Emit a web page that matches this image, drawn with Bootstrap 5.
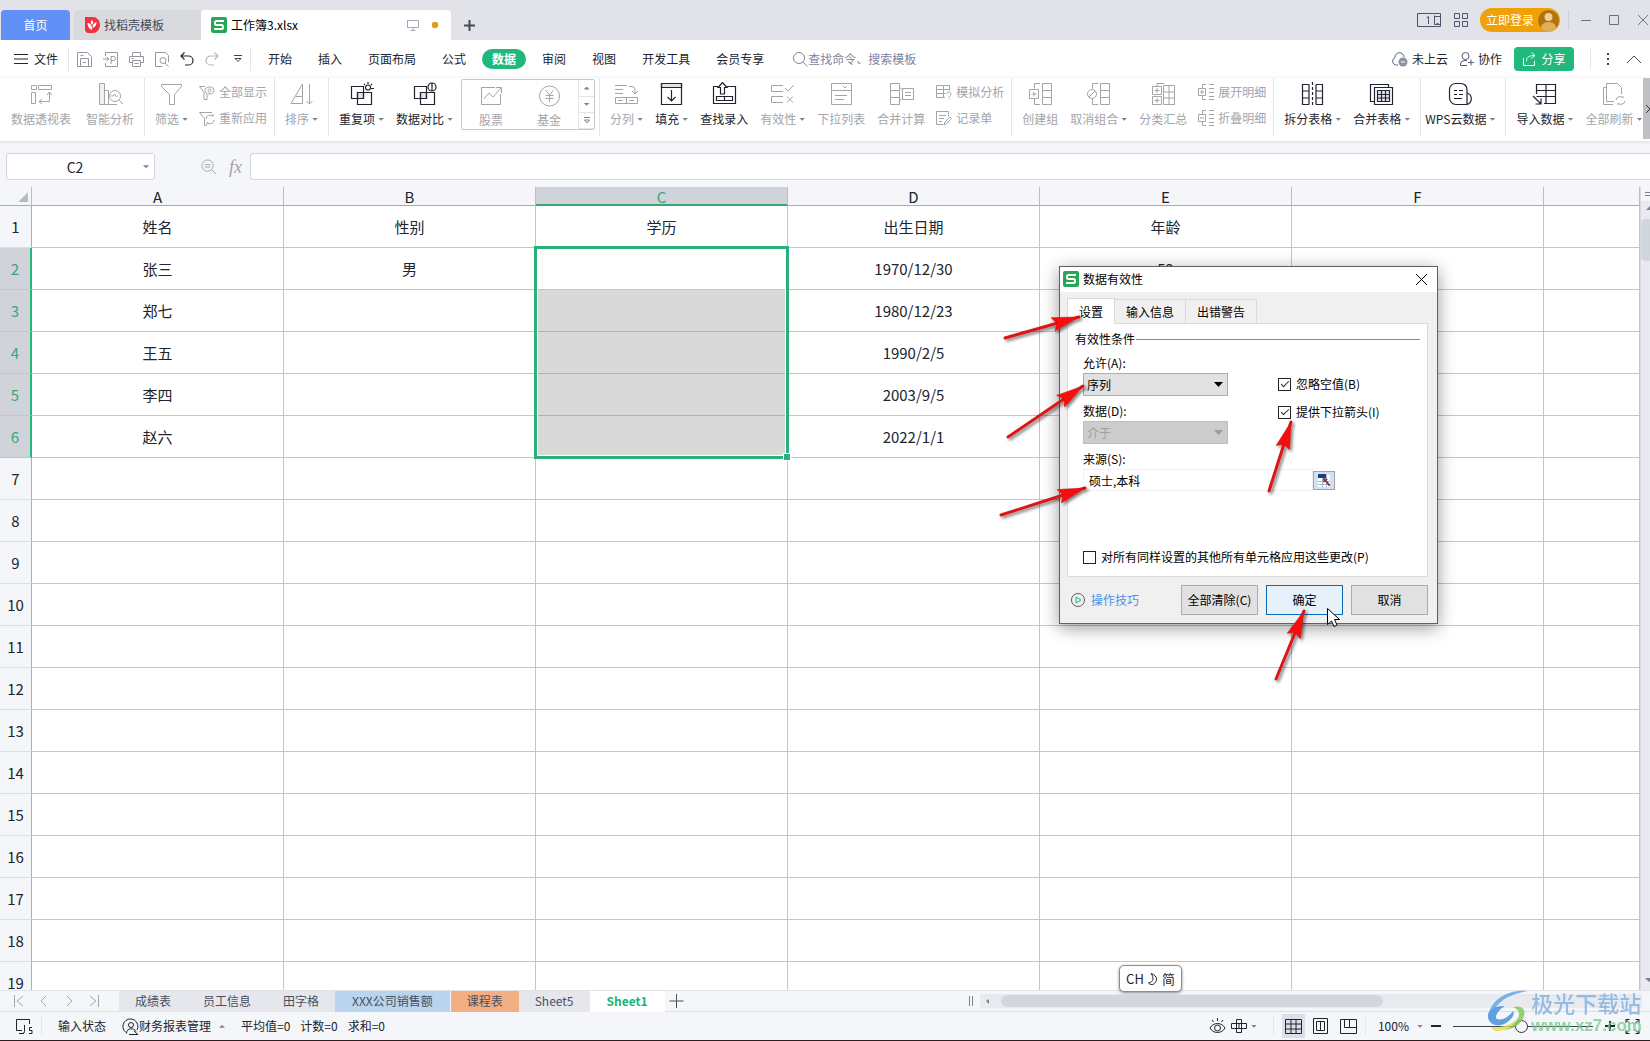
<!DOCTYPE html>
<html lang="zh-CN">
<head>
<meta charset="utf-8">
<meta name="viewport" content="width=device-width, initial-scale=1">
<title>工作簿3.xlsx</title>
<link href="https://cdn.jsdelivr.net/npm/bootstrap@5.3.0/dist/css/bootstrap.min.css" rel="stylesheet">
<style>
:root{--ink:#20242e;--dim:#a2a5aa;--green:#20b97b;--line:#c3c3d3;--chrome:#f4f6f9}
body{font:12px/18px "Noto Sans CJK SC",sans-serif;color:var(--ink);background:var(--chrome);height:100vh}
svg{display:block;flex:none}
svg:not([fill]){fill:none}
svg:not([stroke]){stroke:currentColor}
button,input,select{font:inherit;color:inherit;border:0;background:none;padding:0;border-radius:0}
a{color:inherit;text-decoration:none}
.vsep{width:1px;background:#e6e6ea;flex:none}
/* title bar */
.titlebar{height:40px;background:#e2e3e8;padding:10px 0 0 1px}
.doc{height:30px;border-radius:4px 4px 0 0}
.doc-home{width:69px;background:#6190f8;color:#fff}
.doc-tpl{width:127px;background:#d9dade;padding-left:10px;color:#434a5c;margin-left:4px}
.doc-cur{width:250px;background:#fff;padding:0 12px 0 10px}
.wintools{margin-top:-10px;color:#4b5570}
.login{width:80px;height:24px;border-radius:12px;background:#f0a107;color:#fff;padding-left:6px}
/* menu */
.menubar{height:39px;background:#fff}
.filebtn{margin:0 10px 0 14px;gap:6px}
.quick{gap:11px;color:#9497a0}
.topnav a{padding:0 13px}
.topnav .on{padding:0 3px}
.topnav .on span{display:block;height:20px;line-height:20px;padding:0 10px;border-radius:10px;background:var(--green);color:#fff;font-weight:700}
.find{width:130px;color:#7d86a3}
.find::placeholder{color:#7d86a3;opacity:1}
.share{width:60px;height:24px;border-radius:4px;background:var(--green);color:#fff}
/* ribbon */
.ribbon{height:63px;background:#fff;padding-left:5px;overflow:hidden}
.ribbon-wrap{box-shadow:0 1px 4px #d8dade;z-index:1}
.ribbon .vsep{height:58px;margin:0 4px}
.tool{display:flex;flex-direction:column;align-items:center;padding:4px 6px 0;white-space:nowrap;gap:4px;height:52px}
.tool svg.ic{width:25px;height:24px}
.tool span,.mini{display:flex;align-items:center}
.tool.first{padding-right:9px}
.off{color:var(--dim)}
.caret{width:6px;height:3px;background:#80838b;clip-path:polygon(0 0,100% 0,50% 100%);margin-left:3px;flex:none}
.up{clip-path:polygon(0 100%,100% 100%,50% 0)}
.minis{padding:5px 3px 0 5px}
.mini{gap:4px;height:18px;margin-bottom:8px;white-space:nowrap}
.gallery{width:134px;height:51px;border:1px solid #c6c7cc;border-radius:2px;margin:1px 0 0 2px}
.gallery .tool{width:58px;padding-top:3px}
.gallery-nav{width:16px;border-left:1px solid #e6e6ea;flex:none}
.gallery-nav button{flex:1;display:flex;align-items:center;justify-content:center;border-bottom:1px solid #e6e6ea}
.gallery-nav .caret{margin:0}
.more{width:7px;background:#bfc0c6;height:61px;right:0;top:0;color:#333}
/* formula bar */
.fbar{padding:12px 0 7px 6px}
.namebox{width:149px;height:27px;border:1px solid #d3d5da;border-radius:3px;background:#fff;font-size:14px;margin-right:46px}
.namebox input{width:136px;text-align:center}
.fxline{height:27px;border:1px solid #d3d5da;border-right:0;border-radius:3px 0 0 3px;background:#fff}
.fx{font:italic 18px/20px "Liberation Serif",serif;color:#a2a5aa}
/* grid */
.sheet{min-height:0;overflow:hidden;position:relative}
.cells{table-layout:fixed;border-collapse:separate;border-spacing:0;width:100%;background:#fff;font-size:15px;line-height:20px;text-align:center}
.cells th{font-weight:400;background:var(--chrome);text-align:center;padding:0}
.cells thead th{height:19px;line-height:16px;padding-top:2px;border-right:1px solid #b9bccb;border-bottom:1px solid #a6a7c0}
.cells td,.cells tbody th{height:42px;border-right:1px solid var(--line);border-bottom:1px solid var(--line);padding:0}
.cells tbody th{border-right-color:#aaabc4;border-bottom-color:#dcdde6}
.cells thead .hot{background:#d1d3da;color:#3aa57c;box-shadow:inset 0 -1px #36a678;border-bottom-color:#36a678}
.cells tbody .hot{background:#d1d3da;color:#3aa57c;border-right:2px solid var(--green);border-bottom-color:#c3c5d2}
.cells .picked{background:#d9d9d9;border-bottom-color:#b0b0bb}
.corner{width:10px;height:10px;background:#b9bbbd;clip-path:polygon(100% 0,100% 100%,0 100%);margin:0 3px 0 auto}
.selbox{left:-2px;top:-2px;width:255px;height:213px;border:3px solid #2bb07c;box-shadow:inset 0 0 0 1px #fff}
.selbox i{width:6px;height:6px;right:-4px;bottom:-4px;background:#2bb07c;box-shadow:0 0 0 1px #fff}
.vbar{width:10px;background:#e9eaef;border-left:1px solid #d8dae0}
.vthumb{height:42px;background:#d1d5dc;border-radius:5px 0 0 5px;margin-top:9px}
/* bottom bars */
.tabsbar{height:22px;border-top:1px solid #e2e3e8;border-bottom:1px solid #dcdee6;color:#4a4f5e}
.tabsbar .stab{padding:0 16px;height:21px;line-height:20px;background:#e6e7ed}
.nav-ar{gap:13px;padding:0 19px 0 13px;color:#a2a5ad}
.tabsbar .blue{background:#b8d4ee;padding:0 17px}
.tabsbar .orange{background:#f3ae84;margin-left:1px}
.tabsbar .now{background:#fff;color:#20b573;font-weight:700;padding:0 17px}
.hbar{height:14px;background:#e9eaef;margin:3px 0}
.hthumb{width:382px;height:12px;border-radius:6px;background:#d3d6dc}
.status{height:29px;border-bottom:1px solid #2c1d20}
.stats{gap:10px}
.status .on-view{width:23px;height:24px;background:#dcdfe8}
.zoomer{width:140px;height:14px;appearance:none;margin:0 12px}
.zoomer::-webkit-slider-runnable-track{height:1px;background:#3d4252}
.zoomer::-webkit-slider-thumb{appearance:none;width:13px;height:13px;border:1px solid #333;border-radius:50%;background:#f4f6f9;margin-top:-6px}
/* dialog */
.dlg{left:1059px;top:266px;width:379px;border:1px solid #5e6064;background:#f0f0f0;box-shadow:0 4px 16px rgba(0,0,0,.4);color:#000;z-index:5}
.dlg-head{height:25px;background:#fff;padding:0 10px 1px 3px}
.dlg-body{padding:6px 9px 8px 7px}
.dtabs button{height:24px;padding:0 11px;border:1px solid #d9d9d9;border-left:0;border-bottom:0;background:#f0f0f0;margin-top:1px}
.dtabs .act{background:#fff;margin:0 0 -1px;height:26px;border-left:1px solid #d9d9d9;z-index:1;position:relative}
.pane{height:254px;border:1px solid #dcdcdc;background:#fff;padding:6px 7px 10px 7px}
.pane .inner{padding-left:8px}
.conds{width:195px}
.fl{display:block;padding:6px 0 1px}
.ticks{gap:10px;padding-top:27px}
.rule{height:1px;background:#8b8b8b;flex:1;margin-left:1px}
.combo{width:145px}
.combo select{appearance:none;display:block;width:145px;height:23px;border:1px solid #adadad;background:#e1e1e1;padding:0 3px}
.combo select:disabled{background:#ccc;border-color:#bfbfbf;color:#a0a0a0;opacity:1}
.combo .caret{right:5px;top:9px;width:9px;height:5px;background:#000;pointer-events:none}
.combo .faint{background:#9c9c9c}
.src{width:230px;height:22px;border:1px solid #f0f0f0;padding:0 5px}
.pick{width:22px;height:19px;border:1px solid #9aa3b4;background:#d5dff0}
.box{appearance:none;width:13px;height:13px;border:1px solid #222;background:#fff;display:grid;flex:none;margin:0 1px 0 0}
.box:checked::after{content:"";width:8px;height:4px;border:solid #222;border-width:0 0 1px 1px;transform:rotate(-45deg);margin:2px 0 0 2px}
.dbtn{width:77px;height:30px;border:1px solid #adadad;background:#e1e1e1}
.dbtn.go{background:#e5f1fb;border-color:#0f6cb8}
.tip{color:#4f8fe8;gap:6px}
/* floating layers */
.marks{left:0;top:0;width:100%;height:100%;pointer-events:none;z-index:6}
.ime{left:1119px;top:965px;width:63px;height:27px;border:1px solid #8d8d8d;border-radius:5px;background:#fff;box-shadow:0 1px 3px #888;font-size:13px;z-index:4}
.wm{right:8px;bottom:6px;z-index:7;opacity:.8}
.wm b{display:block;font-size:22px;line-height:30px;font-weight:500;color:#7fb0e0}
.wm em{display:block;font:700 17px/18px "Liberation Sans",sans-serif;color:#7ccb8f}
</style>
<script src="https://cdn.jsdelivr.net/npm/bootstrap@5.3.0/dist/js/bootstrap.bundle.min.js"></script>
</head>
<body class="d-flex flex-column overflow-hidden position-relative">

<header class="titlebar d-flex">
  <a href="#" class="doc doc-home d-flex align-items-center justify-content-center">首页</a>
  <a href="#" class="doc doc-tpl d-flex align-items-center gap-1">
    <svg width="16" height="16" viewBox="0 0 16 16" stroke="none"><path fill="#f2303f" d="M1 0h8a7 8 0 0 1 0 16H4a4 4 0 0 1-3-4z"/><path fill="#fff" d="M8 3c2 2 1 4 0 5-1-1-2-3 0-5zM12.500 5c0 3-1 5-4 6 0-3 1-5 4-6zM3.500 6c3 0 4 2 4.500 5v2C5 12 3.500 9 3.500 6z"/></svg>
    <span>找稻壳模板</span></a>
  <a href="#" class="doc doc-cur d-flex align-items-center gap-1 text-black">
    <svg width="16" height="16" viewBox="0 0 16 16" stroke="none"><rect width="16" height="16" rx="2" fill="#25a757"/><path fill="none" stroke="#fff" stroke-width="2" d="M13 4H5.500A1.500 1.500 0 0 0 4 5.500v1A1.500 1.500 0 0 0 5.500 8h5A1.500 1.500 0 0 1 12 9.500v1a1.500 1.500 0 0 1-1.500 1.500H3"/></svg>
    <span>工作簿3.xlsx</span>
    <svg class="ms-auto" width="12" height="12" viewBox="0 0 12 12" stroke="#a3a8b8"><path d="M.5 1.500h11v7H.5zM6 8.500v3M3.500 11.500h5"/></svg>
    <svg class="ms-2" width="8" height="8" stroke="none"><circle cx="4" cy="4" r="3.200" fill="#dba01a"/></svg>
  </a>
  <button class="ms-2 px-1" aria-label="新建"><svg width="13" height="13" stroke="#434a5c" stroke-width="2"><path d="M6.500 1v11M1 6.500h11"/></svg></button>
  <div class="wintools ms-auto d-flex align-items-center">
    <svg width="25" height="14" viewBox="0 0 25 14"><path d="M.5.500h23v13H.5zM17.500 3.500h6M17.500 2.500v9h6M9.500 5l2-1.500V11M19.500 10.500h2"/></svg>
    <svg class="mx-2 px-1" width="22" height="14" viewBox="0 0 14 14"><path d="M.5.500h5v5h-5zM8.500.500h5v5h-5zM.5 8.500h5v5h-5zM8.500 8.500h5v5h-5z"/></svg>
    <button class="login d-flex align-items-center gap-1">立即登录
      <svg width="21" height="21" viewBox="0 0 21 21" stroke="none"><circle cx="10.500" cy="10.500" r="10.500" fill="#ad7413"/><circle cx="10.500" cy="7" r="4" fill="#f0cd91"/><path fill="#e2ae58" d="M3 18c0-8 15-8 15 0a10 10 0 0 1-15 0z"/></svg></button>
    <div class="vsep mx-2" style="height:20px;background:#cfd0d6"></div>
    <svg width="73" height="12" viewBox="0 0 73 12" stroke="#6b7287"><path d="M4 6.500h10M32.500 1.500h9v9h-9zM61 1l10 10M71 1L61 11"/></svg>
  </div>
</header>

<nav class="menubar d-flex align-items-center">
  <button class="filebtn d-flex align-items-center"><svg width="14" height="12" viewBox="0 0 14 12"><path d="M0 1.500h14M0 6h14M0 10.500h14"/></svg><span>文件</span></button>
  <div class="vsep me-2" style="height:23px"></div>
  <div class="quick d-flex align-items-center">
    <svg width="15" height="15" viewBox="0 0 15 15"><path d="M.5.500h10l4 4v10H.5zM3.500 14V6.500h8V14M3.500 3.500h3M6 10.500h3"/></svg>
    <svg width="15" height="15" viewBox="0 0 15 15"><path d="M2.500 4V.500h12v14h-12V11M0 7h5M3.500 5L6 7 3.500 9M8 12V4.500h2.500a2 2 0 0 1 0 4H8"/></svg>
    <svg width="15" height="15" viewBox="0 0 15 15"><path d="M3.500 4V.500h8V4M3 10.500H.5v-6h14v6H12M3.500 8.500h8v6h-8zM2.500 6.500h2M5.500 11.500h4"/></svg>
    <svg width="14" height="15" viewBox="0 0 14 15"><path d="M7 14.500H.5V.500h10l3 3V10M13.500 14.500L10 11"/><circle cx="8" cy="8.500" r="3"/></svg>
    <svg width="14" height="14" viewBox="0 0 14 14" stroke="#20242e" stroke-width="1.200"><path d="M4.500.500L1 4l3.500 3.500M1 4h7.500a4.500 4.500 0 0 1 0 9H5"/></svg>
    <svg width="14" height="14" viewBox="0 0 14 14" stroke="#b5b8bf" stroke-width="1.200"><path d="M9.500.500L13 4 9.500 7.500M13 4H5.500a4.500 4.500 0 0 0 0 9H9"/></svg>
    <svg class="ms-1" width="8" height="8" viewBox="0 0 8 8" stroke="#444"><path d="M0 .500h8M1 3.500h6L4 6.500z"/></svg>
  </div>
  <div class="vsep ms-2" style="height:23px"></div>
  <div class="topnav d-flex align-items-center ms-1">
    <a href="#">开始</a><a href="#">插入</a><a href="#">页面布局</a><a href="#">公式</a><a href="#" class="on"><span>数据</span></a><a href="#">审阅</a><a href="#">视图</a><a href="#">开发工具</a><a href="#">会员专享</a>
  </div>
  <label class="d-flex align-items-center ms-3" for="find"><svg width="15" height="15" viewBox="0 0 15 15" stroke="#7d86a3"><circle cx="6" cy="6" r="5.500"/><path d="M10 10l4.500 4.500"/></svg></label>
  <input id="find" class="find" placeholder="查找命令、搜索模板">
  <div class="ms-auto d-flex align-items-center">
    <svg width="17" height="15" viewBox="0 0 17 15" stroke="#555c70"><path d="M7 13H4.500a4 4 0 0 1-.5-7.500 4.500 4.500 0 0 1 9-.5"/><circle cx="12" cy="10" r="4.500" fill="#8d93a5" stroke="none"/><path stroke="#fff" d="M10 10h4"/></svg>
    <span class="ms-1">未上云</span>
    <svg class="ms-2 me-1 ps-1" width="18" height="14" viewBox="0 0 14 14" stroke="#555c70"><circle cx="5.500" cy="4" r="3.500"/><path d="M7 13.500H.5V12a4 4 0 0 1 3.500-3.500h3M8 10.500h6M11 7.500v6"/></svg>
    <span class="me-2">协作</span>
    <button class="share d-flex align-items-center justify-content-center ms-1 gap-1"><svg width="15" height="14" viewBox="0 0 15 14"><path d="M1.500 6v7.500h11V9M4.500 9c0-4 3-5.500 8-5.500M9.500.500l3.500 3-3.500 3"/></svg><span>分享</span></button>
    <div class="vsep mx-3" style="height:20px"></div>
    <svg class="me-3" width="3" height="13" stroke="none"><path fill="#444" d="M0 0h2v2H0zM0 5h2v2H0zM0 10h2v2H0z"/></svg>
    <svg class="me-2" width="16" height="9" viewBox="0 0 16 9" stroke="#444"><path d="M1 8l7-7 7 7"/></svg>
  </div>
</nav>

<div class="ribbon-wrap position-relative">
<div class="ribbon d-flex align-items-start">
  <button class="tool off first"><svg class="ic" viewBox="0 0 25 24"><path d="M2.500 3.500h5v4h-5zM9.500 3.500h13v4h-13zM2.500 10.500h4v11h-4zM10 19.500h10.500v-9M13 17l-3 2.500 3 2.500M18 13l2.500-3 2.500 3"/></svg><span>数据透视表</span></button>
  <button class="tool off"><svg class="ic" viewBox="0 0 25 24"><path fill="#f1f1f4" d="M1.500 1.500h5v21h-5z"/><path d="M6.500 8.500h4v14h-4M11 22.500h8"/><circle cx="17" cy="14" r="5.500"/><path d="M21 18l4 4M13 14h2l1.500-2 2 3 1-1.500"/></svg><span>智能分析</span></button>
  <div class="vsep"></div>
  <button class="tool off"><svg class="ic" viewBox="0 0 25 24"><path d="M2.500 2.500h20v2l-7 8v10h-5v-10l-8-8z"/></svg><span>筛选<i class="caret"></i></span></button>
  <div class="minis off">
    <button class="mini"><svg width="16" height="15" viewBox="0 0 16 15"><path d="M6 1.500H.5l4.500 6v7h3v-5"/><ellipse cx="10.500" cy="5.500" rx="4.500" ry="3.500"/><circle cx="10.500" cy="5.500" r="1.500"/></svg>全部显示</button>
    <button class="mini"><svg width="16" height="15" viewBox="0 0 16 15"><path d="M13 1.500H.5l5 6v7h2M7 8a4 4 0 0 1 7-2.500V3M15 9a4 4 0 0 1-7 2.500V14"/></svg>重新应用</button>
  </div>
  <div class="vsep"></div>
  <button class="tool off"><svg class="ic" viewBox="0 0 25 24"><path d="M2 21.500L13.500 2v19.500zM7 14.500h6.500M20.500 2v20M17.500 19l3 3 3-3"/></svg><span>排序<i class="caret"></i></span></button>
  <div class="vsep"></div>
  <button class="tool"><svg class="ic" viewBox="0 0 25 24" stroke-width="1.200"><path fill="#e3e3ee" d="M8.500 10.500h6v6h-6z"/><path d="M2.500 4.500h12v12h-12zM8.500 10.500h14v12h-14zM19 0v2M15 2l1 1M23 2l-1 1M21.500 6.500H25"/><circle cx="19" cy="5.500" r="2.500"/></svg><span>重复项<i class="caret"></i></span></button>
  <button class="tool"><svg class="ic" viewBox="0 0 25 24" stroke-width="1.200"><path fill="#e3e3ee" d="M8.500 10.500h6v6h-6z"/><path d="M2.500 4.500h12v12h-12zM8.500 10.500h14v12h-14zM20 1v8"/><circle cx="20" cy="5" r="4"/></svg><span>数据对比<i class="caret"></i></span></button>
  <div class="gallery d-flex">
    <button class="tool off"><svg class="ic" viewBox="0 0 25 24"><path d="M16 4.500H2.500v17h19V11M5 16l5-6 4 4 8-9M17 4.500h5.500V10"/></svg><span>股票</span></button>
    <button class="tool off"><svg class="ic" viewBox="0 0 25 24"><circle cx="12.500" cy="13" r="10"/><path d="M8.500 7l4 5 4-5M12.500 12v7M8.500 12.500h8M8.500 15.500h8"/></svg><span>基金</span></button>
    <div class="gallery-nav d-flex flex-column">
      <button aria-label="上"><i class="caret up"></i></button><button aria-label="下"><i class="caret"></i></button><button aria-label="更多"><svg width="6" height="7" viewBox="0 0 6 7" stroke="#80838b"><path d="M0 .500h6M.5 3h5L3 6z"/></svg></button>
    </div>
  </div>
  <div class="vsep"></div>
  <button class="tool off"><svg class="ic" viewBox="0 0 25 24"><path d="M1 3.500h12M1 7.500h8M1 11.500h8M15 4.500h3a3 3 0 0 1 3 3v4M18 9l3 3 3-3M1.500 15.500h11v6h-11zM12.500 15.500h11v6h-11zM4 18.500h5M15 18.500h5"/></svg><span>分列<i class="caret"></i></span></button>
  <button class="tool"><svg class="ic" viewBox="0 0 25 24" stroke-width="1.200"><path fill="#e3e3ee" d="M2.500 1.500h20v4h-20z"/><path d="M2.500 1.500h20v21h-20zM12.500 8v11M8.500 15l4 4 4-4"/></svg><span>填充<i class="caret"></i></span></button>
  <button class="tool"><svg class="ic" viewBox="0 0 25 24" stroke-width="1.200"><path d="M6 4.500H1.500v17h22v-17H15M8.500 12V5.500h-2.500l4.500-5 4.500 5h-2.500V12zM4.500 14.500h16v4h-16zM12.500 14.500v4"/></svg><span>查找录入</span></button>
  <button class="tool off"><svg class="ic" viewBox="0 0 25 24"><path d="M13 3.500H1.500v6H13M13 14.500H1.500v6H13M15 6l3 3 6-6M17 14.500l6 6M23 14.500l-6 6"/></svg><span>有效性<i class="caret"></i></span></button>
  <button class="tool off"><svg class="ic" viewBox="0 0 25 24"><path d="M2.500 1.500h20v21h-20zM2.500 8.500h20M14 4l2 2 2-2M6 13.500h12M6 17.500h9"/></svg><span>下拉列表</span></button>
  <button class="tool off"><svg class="ic" viewBox="0 0 25 24"><path d="M1.500 1.500h9v21h-9zM1.500 8.500h9M1.500 15.500h9M13.500 6.500h11v11h-11zM16 10.500h6M16 13.500h6M10.500 5l3 3M10.500 19l3-3"/></svg><span>合并计算</span></button>
  <div class="minis off">
    <button class="mini"><svg width="16" height="15" viewBox="0 0 16 15"><path d="M9 12.500H.5V.500h13v5M.5 4.500h13M.5 8.500H9M7.500.500v12M11 9c0-3 4-2.500 4 0 0 2-2 1.500-2 3.500M13 13.500v1"/></svg>模拟分析</button>
    <button class="mini"><svg width="16" height="15" viewBox="0 0 16 15"><path d="M7 13.500H.5M.5 .500v13M.5.500h12v5M3 4.500h7M3 7.500h5M3 10.500h3M8 14l1-3 5-5 1.500 1.500-5 5z"/></svg>记录单</button>
  </div>
  <div class="vsep"></div>
  <button class="tool off"><svg class="ic" viewBox="0 0 25 24"><path d="M12 1.500H6.500v5M6.500 17v5.500H12M1.500 7.500h9v9h-9zM3.500 12h5M6 9.500v5M14.500 1.500h9v21h-9zM14.500 8.500h9M14.500 15.500h9"/></svg><span>创建组</span></button>
  <button class="tool off"><svg class="ic" viewBox="0 0 25 24"><path d="M12 1.500H6.500v5M6.500 17v5.500H12M3 15l6-6M14.500 1.500h9v21h-9zM14.500 8.500h9M14.500 15.500h9"/><circle cx="6" cy="12" r="4.500"/></svg><span>取消组合<i class="caret"></i></span></button>
  <button class="tool off"><svg class="ic" viewBox="0 0 25 24"><path d="M1.500 4.500h9v8h-9zM1.500 14.500h9v8h-9zM6 6v5M3.500 8.500h5M6 16v5M3.500 18.500h5M6 4V1.500h7M12.500 3.500h11v19h-11zM18 3.500v19M12.500 10h11M12.500 16h11"/></svg><span>分类汇总</span></button>
  <div class="minis off">
    <button class="mini"><svg width="16" height="16" viewBox="0 0 16 16"><path d="M8 .500H4.500V4M4.500 12v3.500H8M.5 4.500h7v7h-7zM2 8h4M4 6v4M11 .500h5M11 4.500h5M11 8.500h5M11 12.500h5M11 15.500h5"/></svg>展开明细</button>
    <button class="mini"><svg width="16" height="16" viewBox="0 0 16 16"><path d="M8 .500H4.500V4M4.500 12v3.500H8M.5 4.500h7v7h-7zM2 8h4M11 .500h5M11 4.500h5M11 8.500h5M11 12.500h5M11 15.500h5"/></svg>折叠明细</button>
  </div>
  <div class="vsep"></div>
  <button class="tool"><svg class="ic" viewBox="0 0 25 24" stroke-width="1.200"><path d="M9 2.500H2.500v20H9M9 2.500v20M2.500 9H9M2.500 16H9M16 2.500h6.500v20H16M16 2.500v20M16 9h6.500M16 16h6.500"/><path stroke-dasharray="3 2" d="M12.500 0v24"/></svg><span>拆分表格<i class="caret"></i></span></button>
  <button class="tool"><svg class="ic" viewBox="0 0 25 24" stroke-width="1.200"><path d="M5 19.500H1.500v-17h18V5"/><path fill="#fff" d="M5.500 5.500h18v17h-18z"/><path fill="#e3e3ee" d="M8.500 8.500h12v11h-12zM8.500 12.500h12M8.500 16h12M12.500 8.500v11M16.500 8.500v11"/></svg><span>合并表格<i class="caret"></i></span></button>
  <div class="vsep"></div>
  <button class="tool ps-0"><svg class="ic" viewBox="0 0 25 24" stroke-width="1.200"><path d="M8 1.500h5a6 6 0 0 1 6 6v15H8a6.500 6.500 0 0 1-6.500-7v-8A6 6 0 0 1 8 1.500zM19 11a6 6 0 0 1 0 11.500M6 8.500h3M11 8.500h4M6 12.500h3M11 12.500h4M6 16.500h8"/></svg><span>WPS云数据<i class="caret"></i></span></button>
  <div class="vsep"></div>
  <button class="tool"><svg class="ic" viewBox="0 0 25 24" stroke-width="1.200"><path d="M4.500 12V2.500h19v19H12M4.500 8.500h19M4.500 14.500h19M14 2.500v19M1 14l8 8M9 16.500V22H3.500"/></svg><span>导入数据<i class="caret"></i></span></button>
  <button class="tool off"><svg class="ic" viewBox="0 0 25 24"><path d="M13 19.500H5.500v-18h11l4 4V12M5 5.500H2.500v17H12M15 18a4 4 0 0 1 7-2v-2M24 19a4 4 0 0 1-7 2v2"/></svg><span>全部刷新<i class="caret"></i></span></button>
</div>
<button class="more position-absolute" aria-label="更多"><svg width="7" height="8" viewBox="0 0 7 8"><path d="M3 0l4 4-4 4"/></svg></button>
</div>

<div class="fbar d-flex align-items-center">
  <div class="namebox d-flex align-items-center"><input value="C2" aria-label="名称框"><i class="caret m-0"></i></div>
  <svg width="16" height="16" viewBox="0 0 17 17" stroke="#a2a5aa"><circle cx="7" cy="7" r="6"/><path d="M11.500 11.500l4.500 4.500M4 6h6M4 8.500h6"/></svg>
  <span class="fx ms-2 me-1 px-1">fx</span>
  <input class="fxline flex-grow-1" aria-label="编辑栏">
</div>

<main class="sheet flex-grow-1 d-flex">
  <div class="flex-grow-1">
  <table class="cells">
    <colgroup><col style="width:32px"><col style="width:252px"><col style="width:252px"><col style="width:252px"><col style="width:252px"><col style="width:252px"><col style="width:252px"><col></colgroup>
    <thead><tr><th><div class="corner"></div></th><th>A</th><th>B</th><th class="hot">C</th><th>D</th><th>E</th><th>F</th><th></th></tr></thead>
    <tbody>
    <tr><th>1</th><td>姓名</td><td>性别</td><td>学历</td><td>出生日期</td><td>年龄</td><td></td><td></td></tr>
    <tr><th class="hot">2</th><td>张三</td><td>男</td><td class="position-relative"><div class="selbox position-absolute"><i class="position-absolute"></i></div></td><td>1970/12/30</td><td>52</td><td></td><td></td></tr>
    <tr><th class="hot">3</th><td>郑七</td><td></td><td class="picked"></td><td>1980/12/23</td><td></td><td></td><td></td></tr>
    <tr><th class="hot">4</th><td>王五</td><td></td><td class="picked"></td><td>1990/2/5</td><td></td><td></td><td></td></tr>
    <tr><th class="hot">5</th><td>李四</td><td></td><td class="picked"></td><td>2003/9/5</td><td></td><td></td><td></td></tr>
    <tr><th class="hot">6</th><td>赵六</td><td></td><td class="picked"></td><td>2022/1/1</td><td></td><td></td><td></td></tr>
    <tr><th>7</th><td></td><td></td><td></td><td></td><td></td><td></td><td></td></tr>
    <tr><th>8</th><td></td><td></td><td></td><td></td><td></td><td></td><td></td></tr>
    <tr><th>9</th><td></td><td></td><td></td><td></td><td></td><td></td><td></td></tr>
    <tr><th>10</th><td></td><td></td><td></td><td></td><td></td><td></td><td></td></tr>
    <tr><th>11</th><td></td><td></td><td></td><td></td><td></td><td></td><td></td></tr>
    <tr><th>12</th><td></td><td></td><td></td><td></td><td></td><td></td><td></td></tr>
    <tr><th>13</th><td></td><td></td><td></td><td></td><td></td><td></td><td></td></tr>
    <tr><th>14</th><td></td><td></td><td></td><td></td><td></td><td></td><td></td></tr>
    <tr><th>15</th><td></td><td></td><td></td><td></td><td></td><td></td><td></td></tr>
    <tr><th>16</th><td></td><td></td><td></td><td></td><td></td><td></td><td></td></tr>
    <tr><th>17</th><td></td><td></td><td></td><td></td><td></td><td></td><td></td></tr>
    <tr><th>18</th><td></td><td></td><td></td><td></td><td></td><td></td><td></td></tr>
    <tr><th>19</th><td></td><td></td><td></td><td></td><td></td><td></td><td></td></tr>
    </tbody>
  </table>
  </div>
  <div class="vbar d-flex flex-column">
    <svg width="10" height="23" viewBox="0 0 10 23"><path fill="#f4f6f9" stroke="none" d="M0 0h10v14H0z"/><path stroke="#7b8092" d="M4 5.500h6M4 8.500h6"/><path fill="#7b8092" stroke="none" d="M5 23l4-4 4 4z"/></svg>
    <div class="vthumb"></div>
    <svg class="mt-auto mb-2" width="9" height="4" stroke="none"><path fill="#7b8092" d="M4 0h8l-4 4z"/></svg>
  </div>
</main>

<div class="tabsbar d-flex align-items-center">
  <div class="nav-ar d-flex">
    <svg width="12" height="12" viewBox="0 0 12 12"><path d="M1.500 0v12M10 1L4 6l6 5"/></svg>
    <svg width="12" height="12" viewBox="0 0 12 12"><path d="M8 1L3 6l5 5"/></svg>
    <svg width="12" height="12" viewBox="0 0 12 12"><path d="M4 1l5 5-5 5"/></svg>
    <svg width="12" height="12" viewBox="0 0 12 12"><path d="M2 1l6 5-6 5M10.500 0v12"/></svg>
  </div>
  <a href="#" class="stab">成绩表</a><a href="#" class="stab">员工信息</a><a href="#" class="stab">田字格</a><a href="#" class="stab blue">XXX公司销售额</a><a href="#" class="stab orange">课程表</a><a href="#" class="stab">Sheet5</a><a href="#" class="stab now">Sheet1</a>
  <button class="px-1" aria-label="新建工作表"><svg width="15" height="14" viewBox="0 0 15 14"><path d="M7.500 0v14M.5 7h14"/></svg></button>
  <div class="ms-auto d-flex align-items-center" style="width:41.500%">
    <svg width="11" height="12" stroke="#7b8092"><path d="M4.500 1v10M7.500 1v10"/></svg>
    <div class="hbar flex-grow-1 d-flex align-items-center me-2 ms-1"><svg width="17" height="8" stroke="none" class="me-1"><path fill="#7b8092" d="M9 2v5L6 4z"/></svg><div class="hthumb"></div></div>
  </div>
</div>

<footer class="status d-flex align-items-center">
  <svg class="ms-3" width="17" height="17" viewBox="0 0 17 17"><path d="M6 12.500H.5V1.500h13V6M3 15.500h5M8.500 7v6.500q0 2-2 2M16 9.500h-2.500v3H16v3h-3"/></svg>
  <div class="vsep ms-2 me-2" style="height:18px"></div>
  <span class="ms-1 me-3 ps-1">输入状态</span>
  <svg width="17" height="17" viewBox="0 0 17 17"><path d="M4 14.500A7.500 7.500 0 1 1 15 12"/><circle cx="9" cy="7" r="2.500"/><path d="M4.500 15.500c0-6 8-6 9.500-2M7 16.500h9M12 13l4 3.500"/></svg>
  <span>财务报表管理</span><i class="caret up ms-2 me-3"></i>
  <div class="stats d-flex"><span>平均值=0</span><span>计数=0</span><span>求和=0</span></div>
  <div class="ms-auto d-flex align-items-center">
    <svg width="17" height="17" viewBox="0 0 17 17"><path d="M1 10c3-6 12-6 15 0-3 6-12 6-15 0zM8.500 0v3M3 2l1.500 2M14 2l-1.500 2"/><circle cx="8.500" cy="10" r="3"/></svg>
    <svg class="ms-1" width="18" height="16" viewBox="0 0 18 16"><path d="M6.500 1.500h5v13h-5zM1.500 5.500h15v5h-15zM9 5.500v5"/></svg><i class="caret"></i>
    <div class="vsep ms-3 me-2" style="height:18px"></div>
    <div class="on-view d-flex align-items-center justify-content-center"><svg width="17" height="15" viewBox="0 0 17 15"><path d="M.5.500h16v14H.5zM.5 5h16M.5 10h16M6 .500v14M11 .500v14"/></svg></div>
    <svg class="mx-2" width="15" height="16" viewBox="0 0 15 16"><path d="M.5.500h14v15H.5zM3.500 3.500h8v9h-8zM7.500 3.500v9"/></svg>
    <svg class="ms-1" width="17" height="15" viewBox="0 0 17 15"><path d="M.5.500h16v14H.5zM4.500.500v8h12M9.500.500v8"/></svg>
    <div class="vsep mx-2" style="height:18px"></div>
    <span class="ms-1">100%</span><i class="caret mx-2"></i>
    <svg width="10" height="10" stroke-width="2"><path d="M0 5h10"/></svg>
    <input type="range" class="zoomer" aria-label="缩放" min="0" max="100" value="49">
    <svg width="10" height="10" stroke-width="2"><path d="M0 5h10M5 0v10"/></svg>
    <svg class="ms-2 me-2" width="19" height="15" viewBox="0 0 14 15"><path d="M.5 4V.500H4M10 .500h3.500V4M.5 11v3.500H4M10 14.500h3.500V11M.5.500l4 4M13.500.500l-4 4M.5 14.500l4-4M13.500 14.500l-4-4"/></svg>
  </div>
</footer>

<form class="dlg position-absolute">
  <div class="dlg-head d-flex align-items-center">
    <svg width="16" height="16" viewBox="0 0 16 16" stroke="none"><rect width="16" height="16" rx="2" fill="#25a757"/><path fill="none" stroke="#fff" stroke-width="2" d="M13 4H5.500A1.500 1.500 0 0 0 4 5.500v1A1.500 1.500 0 0 0 5.500 8h5A1.500 1.500 0 0 1 12 9.500v1a1.500 1.500 0 0 1-1.500 1.500H3"/></svg>
    <span class="ms-1">数据有效性</span>
    <button type="button" class="ms-auto" aria-label="关闭"><svg width="11" height="11" viewBox="0 0 11 11"><path d="M0 0l11 11M11 0L0 11"/></svg></button>
  </div>
  <div class="dlg-body">
    <div class="dtabs d-flex"><button type="button" class="act">设置</button><button type="button">输入信息</button><button type="button">出错警告</button></div>
    <div class="pane d-flex flex-column">
      <div class="d-flex align-items-center"><span>有效性条件</span><div class="rule"></div></div>
      <div class="inner d-flex">
        <div class="conds">
          <label class="fl" for="allow">允许(A):</label>
          <div class="combo position-relative"><select id="allow"><option>序列</option></select><i class="caret position-absolute"></i></div>
          <label class="fl" for="cond">数据(D):</label>
          <div class="combo position-relative"><select id="cond" disabled><option>介于</option></select><i class="caret faint position-absolute"></i></div>
        </div>
        <div class="ticks d-flex flex-column">
          <label class="d-flex align-items-center gap-1"><input type="checkbox" class="box" checked>忽略空值(B)</label>
          <label class="d-flex align-items-center gap-1"><input type="checkbox" class="box" checked>提供下拉箭头(I)</label>
        </div>
      </div>
      <div class="inner">
        <label class="fl" for="src">来源(S):</label>
        <div class="d-flex align-items-center"><input id="src" class="src" value="硕士,本科">
          <button type="button" class="pick" aria-label="选择区域"><svg width="20" height="17" viewBox="0 0 20 17" stroke="none"><path fill="#fff" d="M4 3h12v12H4z"/><path fill="#1d3f86" d="M4 2h8v4H4z"/><path stroke="#a8b4d4" d="M4 9.500h12M4 12.500h12M8.500 6v9M12.500 3v12"/><path fill="#7c3b34" d="M9 6l5 1-1.500 1.200 4 5-1.500 1-4-4.700L9.500 11z"/></svg></button></div>
      </div>
      <label class="inner d-flex align-items-center gap-1 mt-auto"><input type="checkbox" class="box">对所有同样设置的其他所有单元格应用这些更改(P)</label>
    </div>
    <div class="d-flex align-items-center gap-2 pt-2">
      <a href="#" class="tip d-flex align-items-center me-auto ms-1"><svg width="14" height="14" viewBox="0 0 14 14"><circle cx="7" cy="7" r="6.500" stroke="#565b66"/><path stroke="#20b97b" d="M5 4v6l5-3z"/></svg>操作技巧</a>
      <button type="button" class="dbtn">全部清除(C)</button><button type="button" class="dbtn go">确定</button><button type="button" class="dbtn">取消</button>
    </div>
  </div>
</form>

<div class="ime position-absolute d-flex align-items-center justify-content-center gap-1">CH <svg width="10" height="12" viewBox="0 0 10 12"><path d="M3 .500c7 2 7 8 2 11-1 .500-3 0-4.500-1.500C6 9 6 4 3 .500z"/></svg> 简</div>

<svg class="marks position-absolute" stroke="none">
  <defs>
    <filter id="sh" x="-20%" y="-20%" width="150%" height="150%"><feDropShadow dx="2" dy="2" stdDeviation="1.500" flood-color="#000" flood-opacity=".5"/></filter>
    <marker id="hd" markerUnits="userSpaceOnUse" markerWidth="30" markerHeight="16" refX="28" refY="8" orient="auto"><path fill="#f80c0c" stroke="#c81010" stroke-width=".5" d="M28 8L1 1 5 8 1 15z"/></marker>
  </defs>
  <g filter="url(#sh)" stroke="#dc1414" stroke-width="3" stroke-linecap="round">
    <path marker-end="url(#hd)" d="M1005 338L1079 317"/>
    <path marker-end="url(#hd)" d="M1008 437L1083 386"/>
    <path marker-end="url(#hd)" d="M1001 515L1085 488"/>
    <path marker-end="url(#hd)" d="M1269 491L1291 422"/>
    <path marker-end="url(#hd)" d="M1276 679L1304 611"/>
  </g>
  <path fill="#fff" stroke="#000" d="M1327.500 608.500v16l4-3.500 2.500 5.500 3-1.500-2.500-5.500h5z"/>
</svg>

<div class="wm position-absolute d-flex align-items-center" aria-hidden="true">
  <svg width="45" height="42" viewBox="0 0 45 42" stroke="none"><path fill="#5aa5e6" d="M41 1C22-1 4 10 2 27c5-3 6-10 14-16 6-5 13-7 25-10z"/><path fill="#3b8bd8" d="M2 25c-1 9 10 13 18 8 7-4 9-10 7-12-5 7-12 10-16 8-3-2 1-9 8-13C9 16 3 19 2 25z"/><path fill="#7dc855" d="M27 17c9-2 13 2 11 9-2 8-11 14-22 14 9-4 16-9 17-15 .500-4-2-6-6-8z"/><path fill="#e8dc4a" d="M5 37c8 1 18-1 25-7-4 7-11 11-18 11-3 0-6-1-7-4z"/></svg>
  <div><b>极光下载站</b><em>www.xz7.com</em></div>
</div>
</body>
</html>
